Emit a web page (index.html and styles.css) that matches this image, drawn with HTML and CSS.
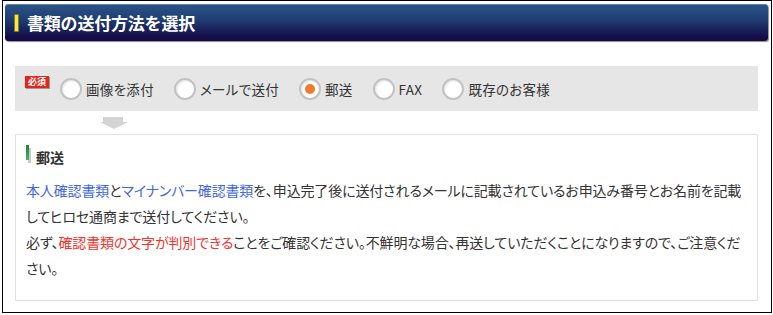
FILE: index.html
```html
<!DOCTYPE html>
<html lang="ja">
<head>
<meta charset="utf-8">
<link rel="stylesheet" href="styles.css">
</head>
<body>
<div class="frame">
  <div class="header">
    <span class="header-bar"></span>
    <h2 class="header-title">書類の送付方法を選択</h2>
  </div>
  <div class="section">
    <div class="choices">
      <span class="badge">必須</span>
      <label class="choice"><span class="radio"></span><span class="choice-label">画像を添付</span></label>
      <label class="choice"><span class="radio"></span><span class="choice-label">メールで送付</span></label>
      <label class="choice"><span class="radio checked"></span><span class="choice-label">郵送</span></label>
      <label class="choice"><span class="radio"></span><span class="choice-label">FAX</span></label>
      <label class="choice"><span class="radio"></span><span class="choice-label">既存のお客様</span></label>
    </div>
    <div class="arrow">
      <svg width="28" height="12" viewBox="0 0 28 12"><path d="M3 0H23V5H28L14 12L0 5H3Z" fill="#d4d4d4"/></svg>
    </div>
    <div class="panel">
      <h3 class="panel-title"><span class="panel-bar"></span>郵送</h3>
      <p class="panel-text"><span class="link">本人確認書類</span>と<span class="link">マイナンバー確認書類</span>を、申込完了後に送付されるメールに記載されているお申込み番号とお名前を記載してヒロセ通商まで送付してください。<br>必ず、<span class="warn">確認書類の文字が判別できる</span>ことをご確認ください。不鮮明な場合、再送していただくことになりますので、ご注意ください。</p>
    </div>
  </div>
</div>
</body>
</html>
```

FILE: styles.css
```css
html, body {
  margin: 0;
  padding: 0;
  background: #fff;
}
body {
  font-family: "Noto Sans CJK JP", "Noto Sans", sans-serif;
  color: #333;
}
.frame {
  margin-left: 2px;
  width: 768px;
  height: 311px;
  border: 1px solid #000;
}
.header {
  margin: 3px 3px 0 2px;
  height: 37px;
  border-radius: 3px;
  background: linear-gradient(#2b5487 0%, #1f3f74 40%, #16124c 85%, #130a40 100%);
  box-shadow: inset 0 1px 0 rgba(255,255,255,0.25), 1px 1px 1px rgba(0,0,0,0.45);
  display: flex;
  align-items: center;
  padding-left: 9px;
}
.header-bar {
  width: 3px;
  height: 16px;
  background: #f3e84a;
  border: 1px solid #8a7d1e;
  border-radius: 1px;
}
.header-title {
  margin: 0 0 0 8px;
  font-size: 17px;
  font-weight: bold;
  color: #fff;
  line-height: 20px;
  letter-spacing: -0.2px;
}
.section {
  margin: 25px 13px 0 12px;
}
.choices {
  height: 45px;
  background: #e6e6e6;
  display: flex;
  align-items: center;
  padding-left: 10px;
}
.badge {
  align-self: flex-start;
  margin-top: 10px;
  width: 24px;
  height: 12px;
  background: #e8231c;
  color: #fff;
  font-size: 9px;
  font-weight: bold;
  line-height: 12px;
  text-align: center;
  box-shadow: 1px 1px 0 #9a9a9a;
  margin-right: 11px;
}
.choice {
  display: flex;
  align-items: center;
  margin-right: 20px;
}
.radio {
  box-sizing: border-box;
  width: 22px;
  height: 22px;
  border-radius: 50%;
  border: 2px solid #c2c2c2;
  background: #fff;
  box-shadow: inset 1px 1px 2px rgba(0,0,0,0.12);
  display: flex;
  align-items: center;
  justify-content: center;
}
.radio.checked::after {
  content: "";
  width: 10px;
  height: 10px;
  border-radius: 50%;
  background: #f37a2c;
}
.choice-label {
  margin-left: 4px;
  font-size: 13.5px;
  font-feature-settings: "palt";
  letter-spacing: 0.3px;
  color: #333;
}
.arrow {
  margin: 6px 0 0 85px;
  height: 12px;
  display: flex;
}
.panel {
  margin-top: 5px;
  border: 1px solid #e2e2e2;
  padding: 10px 10px 19px 10px;
}
.panel-title {
  margin: 0;
  height: 24px;
  display: flex;
  align-items: center;
  font-size: 14px;
  font-weight: bold;
  color: #333;
}
.panel-bar {
  align-self: flex-start;
  width: 3px;
  height: 15px;
  background: linear-gradient(#237a40, #4bb06d);
  box-shadow: 2px 3px 0 #c8c8c8;
  margin-right: 7px;
}
.panel-text {
  margin: 8px 0 0 0;
  font-size: 14px;
  font-feature-settings: "palt";
  line-height: 26px;
  letter-spacing: -0.15px;
  color: #333;
}
.link {
  color: #3f68df;
}
.warn {
  color: #f5332c;
}
```
